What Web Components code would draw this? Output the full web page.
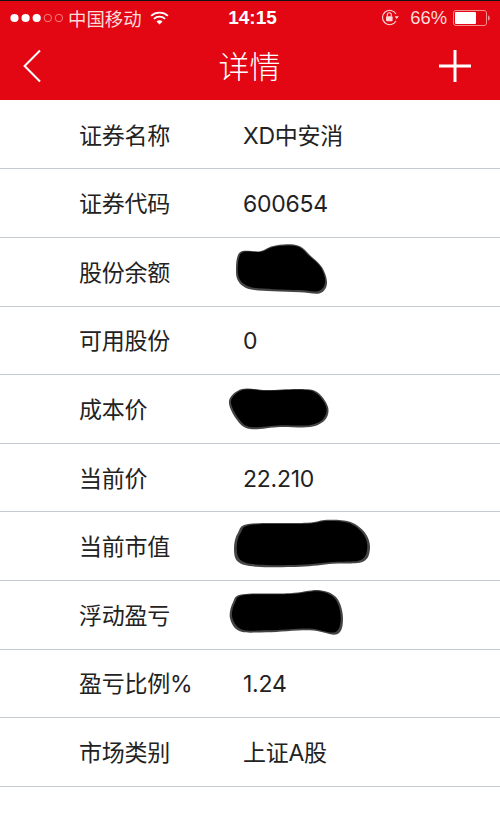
<!DOCTYPE html>
<html>
<head>
<meta charset="utf-8">
<style>
html, body { margin: 0; padding: 0; background: #fff; }
body { font-family: Inter, "Noto Sans CJK SC", sans-serif; overflow: hidden; height: 829px; }
</style>
</head>
<body>
<app-header></app-header>
<detail-list>
  <detail-row label="证券名称">XD中安消</detail-row>
  <detail-row label="证券代码">600654</detail-row>
  <detail-row label="股份余额"><ink-blot top="237.8" points="240,252 260,251 272,246 287,244 300,246 310,255 322,267 327,283 320,293 300,292 273,291 250,289 239,282 236,270"></ink-blot></detail-row>
  <detail-row label="可用股份">0</detail-row>
  <detail-row label="成本价"><ink-blot top="375" points="242,389 267,390 300,389 317,392 328,407 325,420 310,427 280,427 250,429 237,420 229,401"></ink-blot></detail-row>
  <detail-row label="当前价">22.210</detail-row>
  <detail-row label="当前市值"><ink-blot top="512.2" points="250,524 307,523 327,520 350,522 365,533 370,548 363,562 333,564 300,567 257,567 238,562 234,548 238,533"></ink-blot></detail-row>
  <detail-row label="浮动盈亏"><ink-blot top="580.8" points="243,594 290,593 320,590 337,598 343,618 337,634 310,630 267,632 240,631 230,618 233,602"></ink-blot></detail-row>
  <detail-row label="盈亏比例%">1.24</detail-row>
  <detail-row label="市场类别">上证A股</detail-row>
</detail-list>
<script>
// Status bar plus the red navigation bar
const headerTemplate = document.createElement("template");
headerTemplate.innerHTML = `
<style>
:host {
  display: block;
  height: 100px;
  box-sizing: border-box;
  background: #e30613;
  border-top: 1px solid #111;
  color: #fff;
}
.status {
  display: grid;
  grid-template-columns: 1fr auto 1fr;
  align-items: center;
  height: 33px;
  padding: 0 10px;
  font-family: "Liberation Sans", "Noto Sans CJK SC", sans-serif;
  font-size: 18.4px;
  color: #fbdcdc;
}
.left, .right { display: flex; align-items: center; }
.right { justify-content: flex-end; }
.carrier { margin-left: 5px; }
.wifi { margin-left: 8px; }
.time { font-weight: 700; color: #fff; font-size: 19px; margin-left: 5px; }
.pct { margin: 0 6px 0 11px; }
.nav {
  display: grid;
  grid-template-columns: 1fr auto 1fr;
  align-items: center;
  height: 63px;
  padding: 0 29px 3px 22px;
}
.title { font-size: 31px; font-family: "Noto Sans CJK SC", sans-serif; font-weight: 300; line-height: 1; margin-left: 6px; padding-bottom: 2px; }
.plus { justify-self: end; }
svg { display: block; }
</style>
<div class="status">
  <div class="left">
    <svg width="53" height="14" viewBox="0 0 53 14">
      <circle cx="4.5" cy="7" r="4.1" fill="#fff"/><circle cx="15.6" cy="7" r="4.1" fill="#fff"/><circle cx="26.7" cy="7" r="4.1" fill="#fff"/>
      <circle cx="37.8" cy="7" r="3.7" fill="none" stroke="#f58f8f" stroke-width=".9"/><circle cx="48.9" cy="7" r="3.7" fill="none" stroke="#f58f8f" stroke-width=".9"/>
    </svg>
    <span class="carrier">中国移动</span>
    <svg class="wifi" width="19" height="14" viewBox="0 0 20 15" fill="none" stroke="#fff" stroke-width="2">
      <path d="M1 5.2C6 .6 14 .6 19 5.2"/><path d="M4 8.4C7.5 5.3 12.5 5.3 16 8.4"/><path d="M10 14.4 6.8 11.2C8.6 9.6 11.4 9.6 13.2 11.2Z" fill="#fff" stroke="none"/>
    </svg>
  </div>
  <div class="time">14:15</div>
  <div class="right">
    <svg width="18" height="17" viewBox="0 0 18 17" fill="none">
      <path d="M15 5A7.2 7.2 0 1 0 15 12" stroke="#fbdcdc" stroke-width="1.1"/>
      <path d="M13.6 7.2h4.2L15.7 10Z" fill="#fbdcdc"/>
      <rect x="5" y="7.2" width="6.6" height="5" rx="1" fill="#fbdcdc"/>
      <path d="M6.3 7.4V5.8a2 2 0 0 1 4 0v1.6" stroke="#fbdcdc" stroke-width="1.1"/>
    </svg>
    <span class="pct">66%</span>
    <svg width="37" height="16" viewBox="0 0 37 16" fill="none">
      <rect x=".5" y=".5" width="33" height="15" rx="2.5" stroke="#f58f8f"/>
      <rect x="2" y="2" width="21" height="12" rx="1" fill="#fff"/>
      <path d="M35 5.4c1.2.3 1.8 1.3 1.8 2.6s-.6 2.3-1.8 2.6Z" fill="#f58f8f"/>
    </svg>
  </div>
</div>
<div class="nav">
  <svg width="20" height="34" viewBox="0 0 20 34" fill="none" stroke="#fff" stroke-width="2">
    <path d="M18 1.5 2.6 17 18 32.5"/>
  </svg>
  <div class="title">详情</div>
  <svg class="plus" width="32" height="32" viewBox="0 0 32 32" fill="none" stroke="#fff" stroke-width="3">
    <path d="M16 0V32M0 16H32"/>
  </svg>
</div>
`;

class AppHeader extends HTMLElement {
  constructor() {
    super();
    this.root = this.attachShadow({ mode: "open" });
    this.root.append(headerTemplate.content.cloneNode(true));
  }
}
customElements.define("app-header", AppHeader);

// Wrapper for the rows
class DetailList extends HTMLElement {
  constructor() {
    super();
    this.root = this.attachShadow({ mode: "open" });
    this.root.innerHTML = `
<style>
:host { display: flex; flex-direction: column; padding-top: .8px; background: #fff; }
</style>
<slot></slot>`;
  }
}
customElements.define("detail-list", DetailList);

// One label / value row, the value comes through the slot
const rowTemplate = document.createElement("template");
rowTemplate.innerHTML = `
<style>
:host {
  display: grid;
  grid-template-columns: 164px 1fr;
  align-items: center;
  position: relative;
  box-sizing: border-box;
  height: 68.6px;
  padding-left: 79px;
  border-bottom: 1px solid #c6cbd2;
  font-family: Inter, "Noto Sans CJK SC", sans-serif;
  font-size: 23px;
  letter-spacing: -.25px;
  color: #222;
}
.label, .value { white-space: nowrap; line-height: 1; padding-top: 3px; }
</style>
<div class="label"></div>
<div class="value"><slot></slot></div>
`;

class DetailRow extends HTMLElement {
  constructor() {
    super();
    this.root = this.attachShadow({ mode: "open" });
    this.root.append(rowTemplate.content.cloneNode(true));
  }

  static get observedAttributes() {
    return ["label"];
  }

  attributeChangedCallback(attrName, oldValue, newValue) {
    this.root.querySelector(".label").textContent = newValue;
  }
}
customElements.define("detail-row", DetailRow);

// Turn the scribble's outline points into a smooth closed curve
function smoothOutline(pts) {
  let d = `M${pts[0][0]} ${pts[0][1]}`;
  for (let i = 0; i < pts.length; i++) {
    const p0 = pts[(i - 1 + pts.length) % pts.length];
    const p1 = pts[i];
    const p2 = pts[(i + 1) % pts.length];
    const p3 = pts[(i + 2) % pts.length];
    const c1 = [p1[0] + (p2[0] - p0[0]) / 6, p1[1] + (p2[1] - p0[1]) / 6];
    const c2 = [p2[0] - (p3[0] - p1[0]) / 6, p2[1] - (p3[1] - p1[1]) / 6];
    d += `C${c1[0]} ${c1[1]} ${c2[0]} ${c2[1]} ${p2[0]} ${p2[1]}`;
  }
  return d + "Z";
}

// Black scribble drawn over a hidden value. Points are page coordinates,
// "top" is the top of the row it sits in.
class InkBlot extends HTMLElement {
  constructor() {
    super();
    this.root = this.attachShadow({ mode: "open" });
  }

  connectedCallback() {
    const top = this.getAttribute("top");
    const pts = this.getAttribute("points").split(" ").map((p) => p.split(",").map(Number));
    const cx = pts.reduce((sum, p) => sum + p[0], 0) / pts.length;
    const cy = pts.reduce((sum, p) => sum + p[1], 0) / pts.length;
    const d = smoothOutline(pts);
    this.root.innerHTML = `
<style>
:host { position: absolute; left: 0; top: 0; width: 500px; height: 68px; }
svg { display: block; overflow: visible; }
</style>
<svg width="500" height="68" viewBox="0 ${top} 500 68">
  <path d="${d}" fill="#444"/>
  <path d="${d}" fill="#000" transform="translate(${cx} ${cy - 0.5}) scale(.96 .93) translate(${-cx} ${-cy})"/>
</svg>`;
  }
}
customElements.define("ink-blot", InkBlot);
</script>
</body>
</html>
